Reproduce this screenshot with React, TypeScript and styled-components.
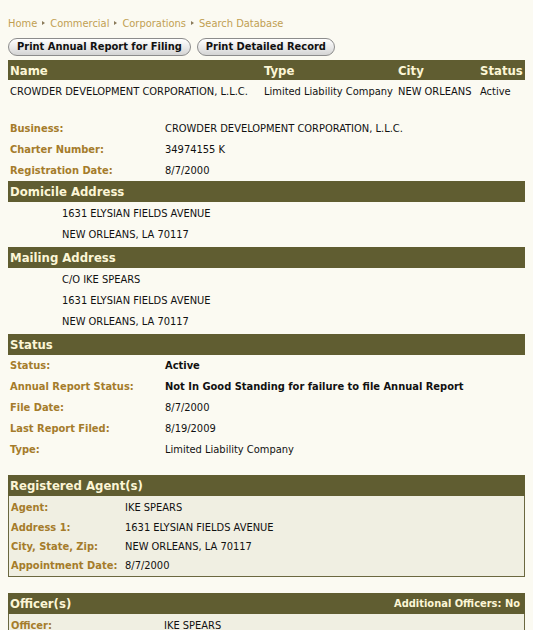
import styled, { createGlobalStyle } from 'styled-components';

const GlobalStyle = createGlobalStyle`
  body {
    margin: 8px;
    background: #fbfaf2;
    font-family: "DejaVu Sans Condensed", "DejaVu Sans", Verdana, sans-serif;
    font-stretch: condensed;
    font-size: 11px;
    color: #111;
  }
`;

const Page = styled.div`
  padding-top: 8px;
`;

const Crumbs = styled.div`
  display: flex;
  align-items: center;
  gap: 5px;
  height: 14px;
  color: #c19f52;
  font-size: 11px;
`;

const CrumbSep = styled.span`
  width: 0;
  height: 0;
  border-left: 3px solid #8a7a5a;
  border-top: 2.5px solid transparent;
  border-bottom: 2.5px solid transparent;
`;

const ButtonRow = styled.div`
  display: flex;
  gap: 6px;
  height: 18px;
  margin-top: 8px;
`;

const PillButton = styled.button`
  height: 18px;
  padding: 0 8px;
  border: 1px solid #8c8c8c;
  border-radius: 9px;
  background: linear-gradient(#ffffff, #e6e6e6 60%, #d4d4d4);
  font-family: inherit;
  font-stretch: condensed;
  font-size: 11px;
  font-weight: bold;
  color: #111;
  line-height: 16px;
`;

const Bar = styled.div<{ $top?: number }>`
  display: flex;
  align-items: center;
  justify-content: space-between;
  height: 21px;
  margin-top: ${(p) => p.$top ?? 0}px;
  padding: 0 5px 0 2px;
  background: #605d31;
  color: #fcf6d6;
  font-size: 13px;
  font-weight: bold;
`;

const BarNote = styled.span`
  font-size: 11px;
`;

const ListGrid = styled.div<{ $head?: boolean }>`
  display: grid;
  grid-template-columns: 254px 134px 82px 1fr;
  align-items: center;
  height: ${(p) => (p.$head ? 20 : 23)}px;
  padding-left: 2px;
  background: ${(p) => (p.$head ? '#605d31' : 'transparent')};
  color: ${(p) => (p.$head ? '#fcf6d6' : '#111')};
  font-size: ${(p) => (p.$head ? 13 : 11)}px;
  font-weight: ${(p) => (p.$head ? 'bold' : 'normal')};
  white-space: nowrap;
`;

const ListTable = styled.div`
  margin-top: 4px;
`;

const Fields = styled.div<{ $top?: number }>`
  margin-top: ${(p) => p.$top ?? 0}px;
`;

const Field = styled.div<{ $label: number; $h?: number }>`
  display: grid;
  grid-template-columns: ${(p) => p.$label}px 1fr;
  align-items: center;
  height: ${(p) => p.$h ?? 21}px;
  padding-left: 2px;
  white-space: nowrap;
`;

const Label = styled.span`
  color: #a57c2b;
  font-weight: bold;
`;

const Value = styled.span<{ $bold?: boolean }>`
  font-weight: ${(p) => (p.$bold ? 'bold' : 'normal')};
`;

const Address = styled.div`
  padding: 1px 0 2px;
`;

const AddressLine = styled.div`
  display: flex;
  align-items: center;
  height: 21px;
  padding-left: 54px;
`;

const Box = styled.div`
  border: 1px solid #6b6840;
  border-top: none;
  background: #f0efe2;
  padding-top: 2px;
`;

export default function App() {
  return (
    <Page>
      <GlobalStyle />
      <Crumbs>
        <span>Home</span>
        <CrumbSep />
        <span>Commercial</span>
        <CrumbSep />
        <span>Corporations</span>
        <CrumbSep />
        <span>Search Database</span>
      </Crumbs>

      <ButtonRow>
        <PillButton type="button">Print Annual Report for Filing</PillButton>
        <PillButton type="button">Print Detailed Record</PillButton>
      </ButtonRow>

      <ListTable>
        <ListGrid $head>
          <span>Name</span>
          <span>Type</span>
          <span>City</span>
          <span>Status</span>
        </ListGrid>
        <ListGrid>
          <span>CROWDER DEVELOPMENT CORPORATION, L.L.C.</span>
          <span>Limited Liability Company</span>
          <span>NEW ORLEANS</span>
          <span>Active</span>
        </ListGrid>
      </ListTable>

      <Fields $top={15}>
        <Field $label={155}>
          <Label>Business:</Label>
          <Value>CROWDER DEVELOPMENT CORPORATION, L.L.C.</Value>
        </Field>
        <Field $label={155}>
          <Label>Charter Number:</Label>
          <Value>34974155 K</Value>
        </Field>
        <Field $label={155}>
          <Label>Registration Date:</Label>
          <Value>8/7/2000</Value>
        </Field>
      </Fields>

      <Bar>Domicile Address</Bar>
      <Address>
        <AddressLine>1631 ELYSIAN FIELDS AVENUE</AddressLine>
        <AddressLine>NEW ORLEANS, LA 70117</AddressLine>
      </Address>

      <Bar>Mailing Address</Bar>
      <Address>
        <AddressLine>C/O IKE SPEARS</AddressLine>
        <AddressLine>1631 ELYSIAN FIELDS AVENUE</AddressLine>
        <AddressLine>NEW ORLEANS, LA 70117</AddressLine>
      </Address>

      <Bar>Status</Bar>
      <Fields>
        <Field $label={155}>
          <Label>Status:</Label>
          <Value $bold>Active</Value>
        </Field>
        <Field $label={155}>
          <Label>Annual Report Status:</Label>
          <Value $bold>Not In Good Standing for failure to file Annual Report</Value>
        </Field>
        <Field $label={155}>
          <Label>File Date:</Label>
          <Value>8/7/2000</Value>
        </Field>
        <Field $label={155}>
          <Label>Last Report Filed:</Label>
          <Value>8/19/2009</Value>
        </Field>
        <Field $label={155}>
          <Label>Type:</Label>
          <Value>Limited Liability Company</Value>
        </Field>
      </Fields>

      <Bar $top={15}>Registered Agent(s)</Bar>
      <Box>
        <Field $label={114} $h={19.4}>
          <Label>Agent:</Label>
          <Value>IKE SPEARS</Value>
        </Field>
        <Field $label={114} $h={19.4}>
          <Label>Address 1:</Label>
          <Value>1631 ELYSIAN FIELDS AVENUE</Value>
        </Field>
        <Field $label={114} $h={19.4}>
          <Label>City, State, Zip:</Label>
          <Value>NEW ORLEANS, LA 70117</Value>
        </Field>
        <Field $label={114} $h={19.4}>
          <Label>Appointment Date:</Label>
          <Value>8/7/2000</Value>
        </Field>
      </Box>

      <Bar $top={16}>
        <span>Officer(s)</span>
        <BarNote>Additional Officers: No</BarNote>
      </Bar>
      <Box>
        <Field $label={153} $h={19.4}>
          <Label>Officer:</Label>
          <Value>IKE SPEARS</Value>
        </Field>
      </Box>
    </Page>
  );
}
